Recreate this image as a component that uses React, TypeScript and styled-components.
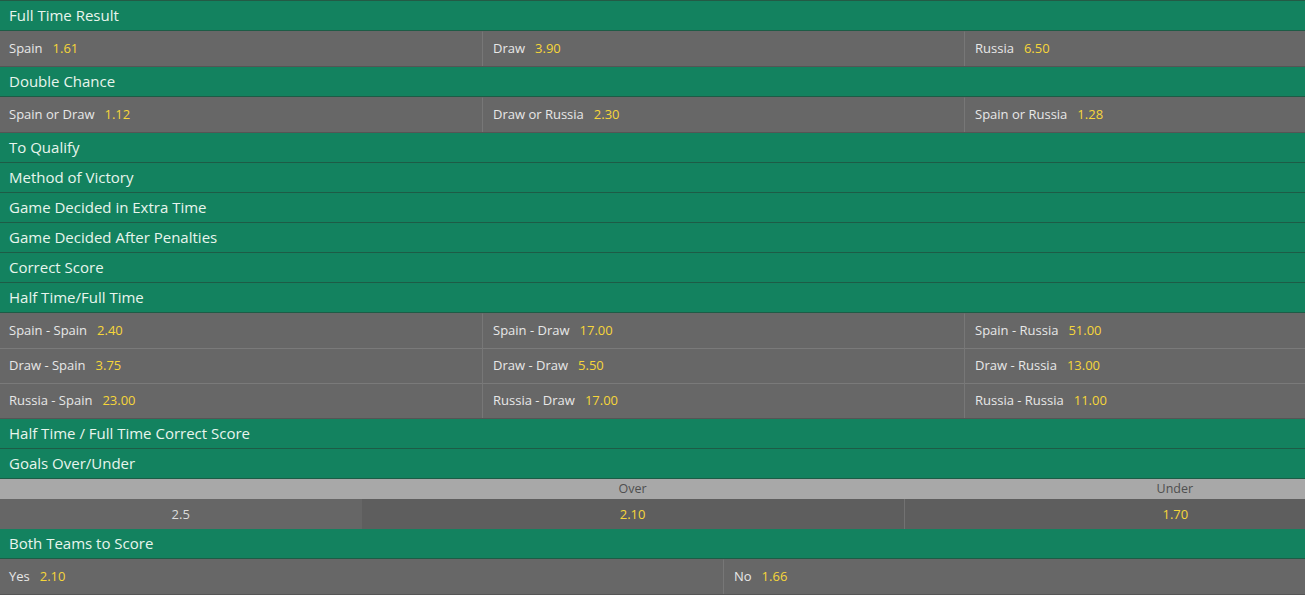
import React from "react";
import styled, { createGlobalStyle } from "styled-components";

const GlobalStyle = createGlobalStyle`
  html, body {
    margin: 0;
    padding: 0;
    background: #666666;
    overflow: hidden;
  }
  body {
    font-family: "Open Sans", "Noto Sans", sans-serif;
  }
`;

const Viewport = styled.div`
  width: 100vw;
  overflow: hidden;
`;

const Page = styled.div`
  width: 1446px;
  display: flex;
  flex-direction: column;
  border-top: 1px solid #245a45;
`;

const MarketHeader = styled.div`
  height: 29px;
  line-height: 29px;
  padding-left: 9px;
  background: #13825f;
  border-bottom: 1px solid #1d5c46;
  color: #e8f5ed;
  font-size: 15px;
  white-space: nowrap;
`;

const SelectionGroup = styled.div<{ $cols: number }>`
  display: grid;
  grid-template-columns: repeat(${(p) => p.$cols}, 1fr);
  background: #676767;
  border-bottom: 1px solid #555555;
`;

const SelectionCell = styled.div<{ $first: boolean; $topRule: boolean }>`
  height: 34px;
  box-sizing: border-box;
  display: flex;
  align-items: center;
  padding-left: ${(p) => (p.$first ? "9px" : "10px")};
  padding-bottom: 2px;
  border-left: ${(p) => (p.$first ? "none" : "1px solid #777777")};
  border-top: ${(p) => (p.$topRule ? "1px solid #7a7a7a" : "1px solid transparent")};
  font-size: 13px;
  white-space: nowrap;
  height: 35px;
`;

const Label = styled.span`
  color: #e8e8e8;
`;

const Odds = styled.span`
  color: #f6d63a;
  margin-left: 10px;
`;

const LineHeaderRow = styled.div`
  display: grid;
  grid-template-columns: 25% 37.5% 37.5%;
  height: 20px;
  background: #a8a8a8;
`;

const LineHeaderCell = styled.div`
  text-align: center;
  line-height: 20px;
  font-size: 12.5px;
  color: #4f4f4f;
`;

const LineRow = styled.div`
  display: grid;
  grid-template-columns: 25% 37.5% 37.5%;
  height: 30px;
`;

const LineValue = styled.div`
  background: #666666;
  color: #dcdcdc;
  font-size: 13px;
  line-height: 30px;
  text-align: center;
`;

const LineOdds = styled.div<{ $divider: boolean }>`
  background: #5e5e5e;
  color: #f6d63a;
  font-size: 13px;
  line-height: 30px;
  text-align: center;
  border-left: ${(p) => (p.$divider ? "1px solid #727272" : "none")};
`;

type Sel = [string, string];

const Market: React.FC<{ title: string; rows?: Sel[][] }> = ({ title, rows }) => (
  <>
    <MarketHeader>{title}</MarketHeader>
    {rows && (
      <SelectionGroup $cols={rows[0].length}>
        {rows.map((row, ri) =>
          row.map(([label, odds], ci) => (
            <SelectionCell key={`${ri}-${ci}`} $first={ci === 0} $topRule={ri > 0}>
              <Label>{label}</Label>
              <Odds>{odds}</Odds>
            </SelectionCell>
          ))
        )}
      </SelectionGroup>
    )}
  </>
);

export default function App() {
  return (
    <>
      <GlobalStyle />
      <Viewport>
        <Page>
          <Market title="Full Time Result" rows={[[["Spain", "1.61"], ["Draw", "3.90"], ["Russia", "6.50"]]]} />
          <Market
            title="Double Chance"
            rows={[[["Spain or Draw", "1.12"], ["Draw or Russia", "2.30"], ["Spain or Russia", "1.28"]]]}
          />
          <Market title="To Qualify" />
          <Market title="Method of Victory" />
          <Market title="Game Decided in Extra Time" />
          <Market title="Game Decided After Penalties" />
          <Market title="Correct Score" />
          <Market
            title="Half Time/Full Time"
            rows={[
              [["Spain - Spain", "2.40"], ["Spain - Draw", "17.00"], ["Spain - Russia", "51.00"]],
              [["Draw - Spain", "3.75"], ["Draw - Draw", "5.50"], ["Draw - Russia", "13.00"]],
              [["Russia - Spain", "23.00"], ["Russia - Draw", "17.00"], ["Russia - Russia", "11.00"]],
            ]}
          />
          <Market title="Half Time / Full Time Correct Score" />
          <MarketHeader>Goals Over/Under</MarketHeader>
          <LineHeaderRow>
            <LineHeaderCell />
            <LineHeaderCell>Over</LineHeaderCell>
            <LineHeaderCell>Under</LineHeaderCell>
          </LineHeaderRow>
          <LineRow>
            <LineValue>2.5</LineValue>
            <LineOdds $divider={false}>2.10</LineOdds>
            <LineOdds $divider>1.70</LineOdds>
          </LineRow>
          <Market title="Both Teams to Score" rows={[[["Yes", "2.10"], ["No", "1.66"]]]} />
        </Page>
      </Viewport>
    </>
  );
}
